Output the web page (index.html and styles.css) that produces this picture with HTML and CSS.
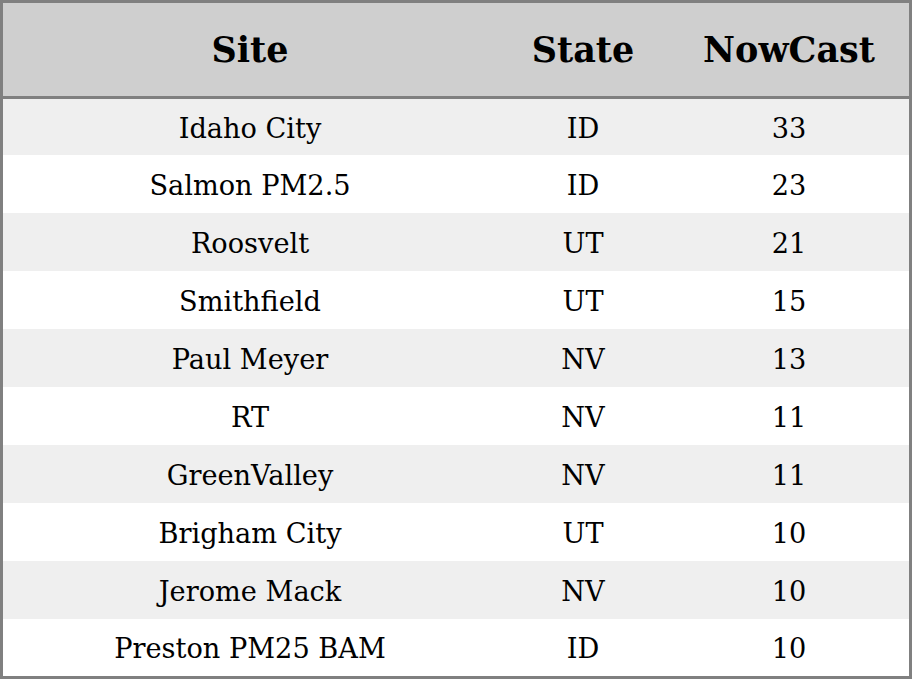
FILE: index.html
```html
<!DOCTYPE html>
<html>
<head>
<meta charset="utf-8">
<link rel="stylesheet" href="styles.css">
</head>
<body>
<table class="aq">
  <colgroup>
    <col class="c-site">
    <col class="c-state">
    <col class="c-now">
  </colgroup>
  <thead>
    <tr><th>Site</th><th>State</th><th>NowCast</th></tr>
  </thead>
  <tbody>
    <tr><td>Idaho City</td><td>ID</td><td>33</td></tr>
    <tr><td>Salmon PM2.5</td><td>ID</td><td>23</td></tr>
    <tr><td>Roosvelt</td><td>UT</td><td>21</td></tr>
    <tr><td>Smithfield</td><td>UT</td><td>15</td></tr>
    <tr><td>Paul Meyer</td><td>NV</td><td>13</td></tr>
    <tr><td>RT</td><td>NV</td><td>11</td></tr>
    <tr><td>GreenValley</td><td>NV</td><td>11</td></tr>
    <tr><td>Brigham City</td><td>UT</td><td>10</td></tr>
    <tr><td>Jerome Mack</td><td>NV</td><td>10</td></tr>
    <tr><td>Preston PM25 BAM</td><td>ID</td><td>10</td></tr>
  </tbody>
</table>
</body>
</html>
```

FILE: styles.css
```css
html, body {
  margin: 0;
  padding: 0;
  background: #ffffff;
}

.aq {
  width: 912px;
  table-layout: fixed;
  border-collapse: separate;
  border-spacing: 0;
  border: 3px solid #808080;
  font-family: "DejaVu Serif", serif;
  color: #000;
}

.c-site { width: 494px; }
.c-state { width: 172px; }
.c-now { width: 240px; }

.aq th {
  height: 93px;
  padding: 0;
  background: #cfcfcf;
  border-bottom: 3px solid #808080;
  font-size: 35px;
  font-weight: bold;
  text-align: center;
  vertical-align: middle;
}

.aq td {
  box-sizing: border-box;
  height: 58px;
  padding: 2px 0 0 0;
  font-size: 27.2px;
  text-align: center;
  vertical-align: middle;
  white-space: nowrap;
}

.aq tbody tr:first-child td {
  height: 56px;
}

.aq tbody tr:last-child td {
  height: 57px;
}

.aq tbody tr:nth-child(odd) td {
  background: #efefef;
}

.aq tbody tr:nth-child(even) td {
  background: #ffffff;
}
```
